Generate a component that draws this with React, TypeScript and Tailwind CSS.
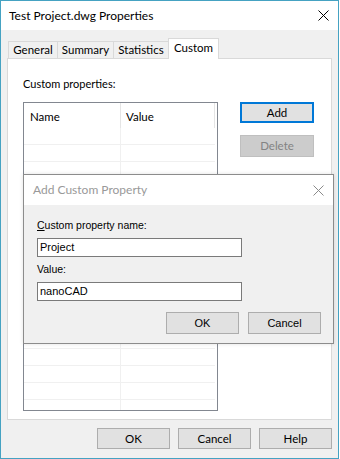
import React from 'react';

const rows = Array.from({ length: 17 });

const WinButton = ({ label, className = '' }: { label: string; className?: string }) => (
  <div
    className={`flex items-center justify-center w-[73px] h-[21px] border border-[#adadad] bg-[#e1e1e1] text-[11.5px] text-black ${className}`}
  >
    {label}
  </div>
);

const Tab = ({ label, width, active }: { label: string; width: string; active?: boolean }) => (
  <div
    className={
      active
        ? `${width} h-[21px] -mb-[1px] relative z-10 bg-white border border-b-0 border-[#d9d9d9] flex items-center justify-center pb-[3px] text-[11.5px]`
        : `${width} h-[17px] bg-[#f0f0f0] border border-b-0 border-r-0 border-[#d9d9d9] flex items-center justify-center text-[11.5px]`
    }
  >
    {label}
  </div>
);

const App = () => {
  return (
    <div
      className="relative w-[339px] h-[459px] border border-[#45a2c2] bg-[#f0f0f0] flex flex-col text-black"
      style={{ fontFamily: 'Lato, "Noto Sans", sans-serif' }}
    >
      {/* title bar */}
      <div className="h-[29px] bg-white flex items-center justify-between pl-[8px] pr-[9px]">
        <span className="text-[12px]">Test Project.dwg Properties</span>
        <svg width="11" height="11" viewBox="0 0 11 11" className="text-black">
          <path d="M0.5 0.5 L10.5 10.5 M10.5 0.5 L0.5 10.5" stroke="currentColor" strokeWidth="1" />
        </svg>
      </div>

      <div className="flex flex-col pl-[6px] pr-[6px] pt-[8px]">
        {/* tabs */}
        <div className="flex items-end ml-[1px] h-[20px]">
          <Tab label="General" width="w-[49px]" />
          <Tab label="Summary" width="w-[56px]" />
          <Tab label="Statistics" width="w-[55px]" />
          <Tab label="Custom" width="w-[51px]" active />
        </div>

        {/* panel */}
        <div className="w-[325px] h-[362px] bg-white border border-[#d9d9d9] flex flex-col pl-[15px] pt-[17px]">
          <div className="text-[11px] leading-[16px]">Custom properties:</div>
          <div className="flex mt-[10px]">
            {/* list view */}
            <div className="w-[195px] h-[309px] border border-[#828790] overflow-hidden flex flex-col">
              <div className="flex h-[25px] shrink-0 text-[11.5px]">
                <div className="w-[97px] border-r border-[#e5e5e5] pl-[6px] pt-[5px]">Name</div>
                <div className="w-[94px] border-r border-[#e5e5e5] pl-[5px] pt-[5px]">Value</div>
              </div>
              {rows.map((_, i) => (
                <div key={i} className="flex h-[17px] shrink-0 w-[191px] border-b border-[#f0f0f0]">
                  <div className="w-[97px] border-r border-[#f0f0f0]" />
                  <div className="w-[94px]" />
                </div>
              ))}
            </div>

            <div className="flex flex-col ml-[22px] gap-[12px]">
              <div className="flex items-center justify-center w-[74px] h-[21px] border-2 border-[#0078d7] bg-[#e1e1e1] text-[11.5px]">
                Add
              </div>
              <div className="flex items-center justify-center w-[74px] h-[22px] border border-[#bfbfbf] bg-[#cccccc] text-[11.5px] text-[#838383]">
                Delete
              </div>
            </div>
          </div>
        </div>

        {/* bottom buttons */}
        <div className="flex justify-end gap-[8px] mt-[8px]">
          <WinButton label="OK" />
          <WinButton label="Cancel" />
          <WinButton label="Help" />
        </div>
      </div>

      {/* Add Custom Property dialog */}
      <div className="absolute left-[22px] top-[173px] w-[311px] h-[170px] border border-[#8c8c8c] bg-[#f0f0f0] flex flex-col shadow-[0_0_4px_rgba(0,0,0,0.12)]">
        <div className="h-[30px] bg-white flex items-center justify-between pl-[9px] pr-[9px] shrink-0">
          <span className="text-[12px] text-[#999999]">Add Custom Property</span>
          <svg width="11" height="11" viewBox="0 0 11 11" className="text-[#8a8a8a]">
            <path d="M0.5 0.5 L10.5 10.5 M10.5 0.5 L0.5 10.5" stroke="currentColor" strokeWidth="1" />
          </svg>
        </div>
        <div
          className="flex flex-col pl-[13px] pt-[14px] text-[10.5px]"
          style={{ fontFamily: '"Liberation Sans", Arial, sans-serif' }}
        >
          <div className="leading-[13px]">
            <span className="underline">C</span>ustom property name:
          </div>
          <div className="mt-[6px] w-[205px] h-[19px] border border-[#7a7a7a] bg-white flex items-center pl-[2px] text-[11px]">
            Project
          </div>
          <div className="mt-[6px] leading-[13px]">Value:</div>
          <div className="mt-[6px] w-[205px] h-[19px] border border-[#7a7a7a] bg-white flex items-center pl-[2px] text-[11px]">
            nanoCAD
          </div>
          <div className="flex justify-end gap-[9px] mt-[11px] pr-[12px]">
            <div className="flex items-center justify-center w-[73px] h-[22px] border border-[#adadad] bg-[#e1e1e1] text-[11px]">
              OK
            </div>
            <div className="flex items-center justify-center w-[73px] h-[22px] border border-[#adadad] bg-[#e1e1e1] text-[11px]">
              Cancel
            </div>
          </div>
        </div>
      </div>
    </div>
  );
};

export default App;
